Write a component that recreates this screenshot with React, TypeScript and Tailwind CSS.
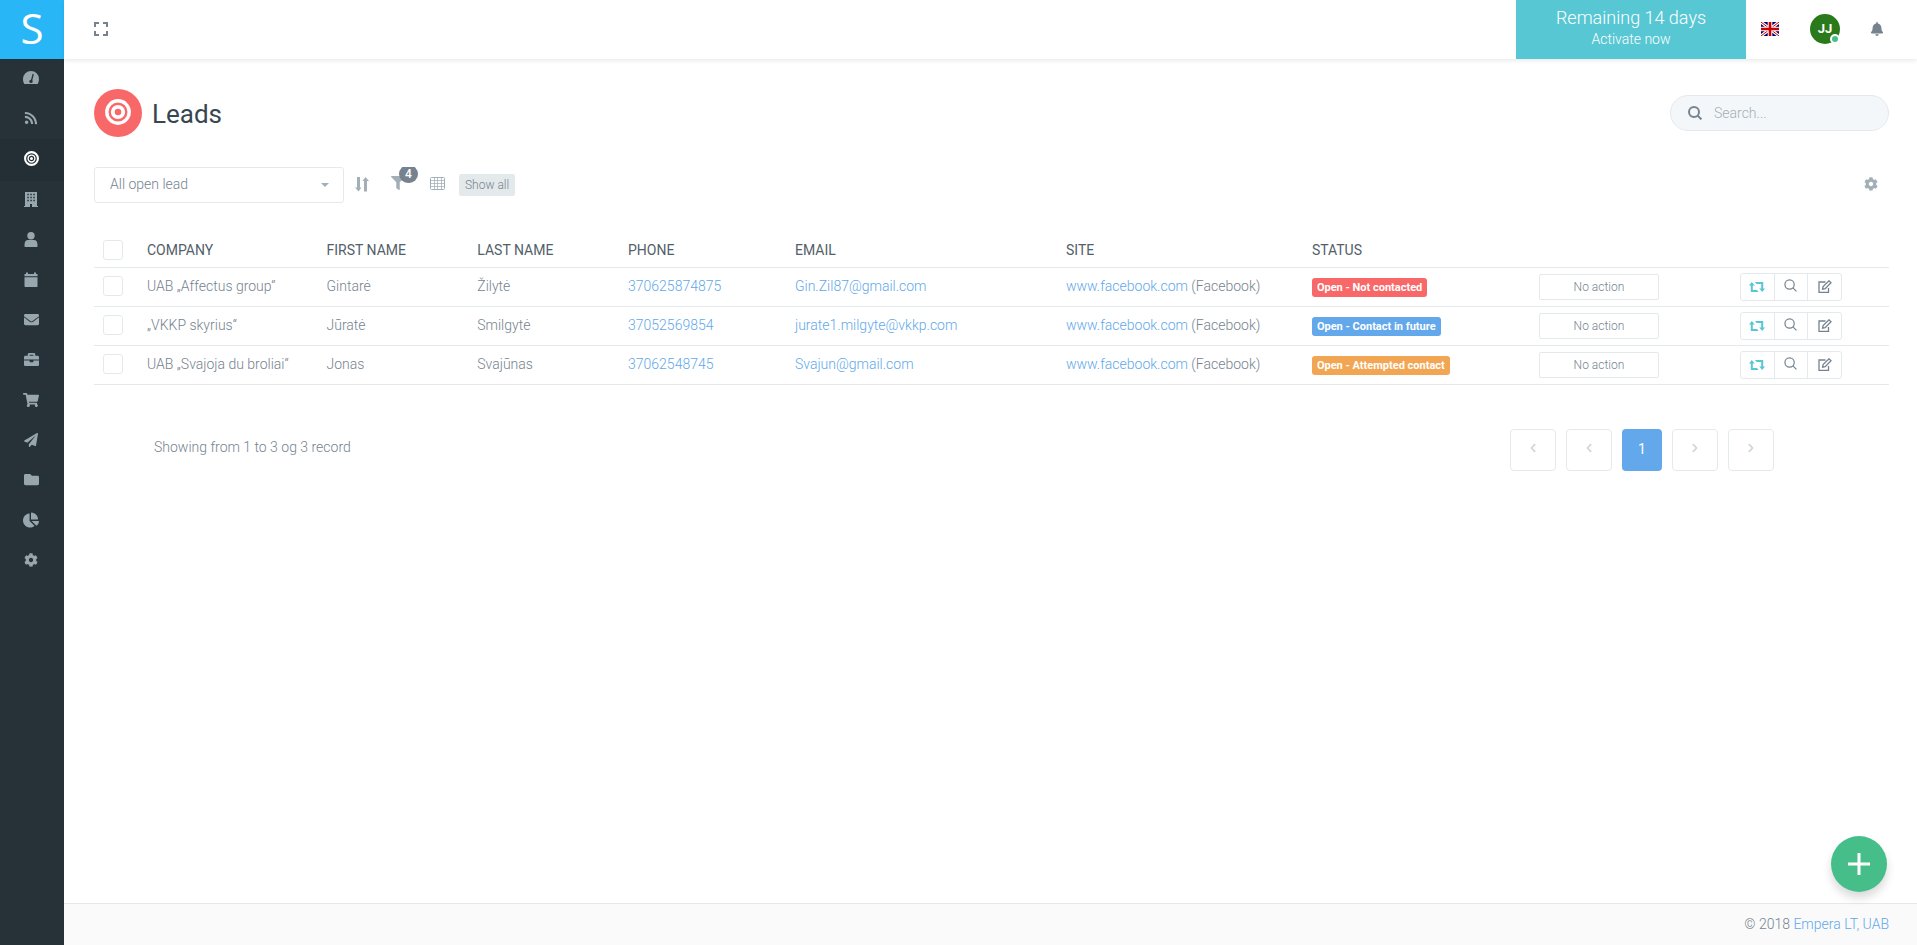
import type { ReactNode } from "react";
import {
  FaBell,
  FaBriefcase,
  FaChartPie,
  FaChevronLeft,
  FaChevronRight,
  FaCog,
  FaEnvelope,
  FaFilter,
  FaFolder,
  FaPaperPlane,
  FaRss,
  FaShoppingCart,
} from "react-icons/fa";

function TargetIcon({ size }: { size: number }) {
  return (
    <svg width={size} height={size} viewBox="0 0 28 28" fill="none" stroke="currentColor">
      <circle cx="14" cy="14" r="12" strokeWidth="4" />
      <circle cx="14" cy="14" r="6.4" strokeWidth="2.6" />
      <circle cx="14" cy="14" r="2.8" fill="currentColor" stroke="none" />
    </svg>
  );
}

function HeadingTargetIcon() {
  return (
    <svg width="26" height="26" viewBox="0 0 26 26" fill="none" stroke="currentColor">
      <circle cx="13" cy="13" r="11.2" strokeWidth="3.4" />
      <circle cx="13" cy="13" r="5.2" strokeWidth="3.8" />
    </svg>
  );
}

function GaugeIcon() {
  return (
    <svg width="16" height="13" viewBox="0 0 16 13">
      <path fill="currentColor" d="M8 0a8 8 0 0 1 8 8c0 1.8-.5 3.500-1.300 5H1.300A9 9 0 0 1 0 8a8 8 0 0 1 8-8Z" />
      <path d="M10.200 3 8.400 10" stroke="#263238" strokeWidth="1.3" />
      <circle cx="8" cy="10.400" r="1.7" fill="#263238" />
    </svg>
  );
}

function BuildingIcon() {
  return (
    <svg width="14" height="15" viewBox="0 0 14 15">
      <path fill="currentColor" d="M1 0h12v14h1v1H8v-3H6v3H0v-1h1Z" />
      <path stroke="#263238" strokeWidth="1.5" strokeDasharray="1.5 1.5" d="M3.300 2.500h8M3.300 5.500h8M3.300 8.500h8" />
    </svg>
  );
}

function UserIcon() {
  return (
    <svg width="14" height="15" viewBox="0 0 14 15" fill="currentColor">
      <circle cx="7" cy="3.700" r="3.700" />
      <path d="M4 8h6c2.200 0 3.500 1.800 3.500 5v1c0 .6-.4 1-1 1h-11c-.6 0-1-.4-1-1v-1c0-3.200 1.300-5 3.500-5Z" />
    </svg>
  );
}

function CalendarIcon() {
  return (
    <svg width="14" height="15" viewBox="0 0 14 15" fill="currentColor">
      <path d="M.5 2H2V.5h2V2h6V.5h2V2h1.500v2.200H.5Z" />
      <path d="M.5 5.200h13V14c0 .6-.4 1-1 1h-11c-.6 0-1-.4-1-1Z" />
    </svg>
  );
}

function ExpandIcon() {
  return (
    <svg width="14" height="14" viewBox="0 0 14 14" fill="none" stroke="currentColor" strokeWidth="2">
      <path d="M1 5V1h4M9 1h4v4M13 9v4H9M5 13H1V9" />
    </svg>
  );
}

function SearchIcon({ size, weight }: { size: number; weight: number }) {
  return (
    <svg width={size} height={size} viewBox="0 0 14 14" fill="none" stroke="currentColor" strokeWidth={weight}>
      <circle cx="6" cy="6" r="5" />
      <path d="m9.600 9.600 3.800 3.800" />
    </svg>
  );
}

function SortIcon() {
  return (
    <svg width="14" height="15" viewBox="0 0 14 15" fill="currentColor">
      <path d="M2 0h3v10.500h1.500L3.500 14.500 0 10.500h2ZM9 14.500h3V4h2L10.500 0 7.500 4H9Z" />
    </svg>
  );
}

function GridIcon() {
  return (
    <svg width="15" height="14" viewBox="0 0 15 14" fill="none" stroke="currentColor">
      <rect x=".5" y=".5" width="14" height="12" rx="1" />
      <path d="M.5 3.500h14M.5 6.500h14M.5 9.500h14M4.500 1v12M7.500 1v12M11.500 1v12" strokeOpacity=".75" />
    </svg>
  );
}

function ConvertIcon() {
  return (
    <svg width="16" height="10" viewBox="0 0 16 10" fill="currentColor">
      <path d="M2.800 0 5.800 3.500h-2V8H8l1.600 2H1.800V3.500H0ZM13.200 10l-3-3.500h2V2H7.600L6 0h8.200v6.500H16Z" />
    </svg>
  );
}

function EditIcon() {
  return (
    <svg width="14" height="13" viewBox="0 0 14 13" fill="none" stroke="currentColor" strokeWidth="1.300">
      <path d="M7.500 2H1v10.300h9.500V8" />
      <path d="m4.600 9.200.5-2.700L11 .8l2 2-5.800 5.900Z" />
    </svg>
  );
}

function FlagIcon() {
  return (
    <svg width="18" height="14" viewBox="0 0 18 14">
      <path fill="#00006b" d="M0 0h18v14H0z" />
      <path d="m0 0 18 14M18 0 0 14" stroke="#fff" strokeWidth="3" />
      <path d="m0 0 18 14M18 0 0 14" stroke="#cc0000" strokeWidth="1" />
      <path d="M9 0v14M0 7h18" stroke="#fff" strokeWidth="4.600" />
      <path d="M9 0v14M0 7h18" stroke="#cc0000" strokeWidth="2.600" />
    </svg>
  );
}

const menu: { label: string; icon: ReactNode; active?: boolean }[] = [
  { label: "Dashboard", icon: <GaugeIcon /> },
  { label: "Feed", icon: <FaRss size={14} /> },
  { label: "Leads", icon: <TargetIcon size={15} />, active: true },
  { label: "Companies", icon: <BuildingIcon /> },
  { label: "Contacts", icon: <UserIcon /> },
  { label: "Calendar", icon: <CalendarIcon /> },
  { label: "Mail", icon: <FaEnvelope size={15} /> },
  { label: "Deals", icon: <FaBriefcase size={15} /> },
  { label: "Orders", icon: <FaShoppingCart size={16} /> },
  { label: "Campaigns", icon: <FaPaperPlane size={14} /> },
  { label: "Files", icon: <FaFolder size={15} /> },
  { label: "Reports", icon: <FaChartPie size={16} /> },
  { label: "Settings", icon: <FaCog size={14} /> },
];

const leads = [
  { company: "UAB „Affectus group“", first: "Gintarė", last: "Žilytė", phone: "370625874875", email: "Gin.Zil87@gmail.com", status: "Open - Not contacted", color: "bg-[#f96868]" },
  { company: "„VKKP skyrius“", first: "Jūratė", last: "Smilgytė", phone: "37052569854", email: "jurate1.milgyte@vkkp.com", status: "Open - Contact in future", color: "bg-[#62a8ea]" },
  { company: "UAB „Svajoja du broliai“", first: "Jonas", last: "Svajūnas", phone: "37062548745", email: "Svajun@gmail.com", status: "Open - Attempted contact", color: "bg-[#f2a654]" },
];

function Checkbox({ label }: { label: string }) {
  return (
    <input
      type="checkbox"
      aria-label={label}
      className="ml-px block h-5 w-5 appearance-none rounded-[3px] border border-[#e4eaec] bg-white checked:bg-[#62a8ea]"
    />
  );
}

function Sidebar() {
  return (
    <aside className="w-16 shrink-0 bg-[#263238]">
      <a href="#" className="flex h-[59px] items-center justify-center bg-[#29b6f6] pb-1 font-['Open_Sans',sans-serif] text-[42px] leading-none font-normal text-white">
        S
      </a>
      <nav>
        {menu.map((item) => (
          <a
            key={item.label}
            href="#"
            aria-label={item.label}
            className={`flex items-center justify-center pr-[2px] pb-[3px] ${item.active ? "h-[42px] bg-[#242f35] text-white" : "h-10 text-[#98a6ad]"}`}
          >
            {item.icon}
          </a>
        ))}
      </nav>
    </aside>
  );
}

function Header() {
  return (
    <header className="flex h-[59px] items-center bg-white pl-[30px] text-[#76838f] shadow-[0_2px_4px_rgba(0,0,0,0.08)]">
      <button aria-label="Fullscreen" className="pb-px">
        <ExpandIcon />
      </button>
      <a href="#" className="ml-auto flex h-full w-[230px] flex-col items-center bg-[#57c7d4] pt-[5px] text-white">
        <span className="text-lg leading-[26px]">Remaining 14 days</span>
        <span className="text-sm leading-4">Activate now</span>
      </a>
      <button aria-label="Language" className="ml-[15px] pb-px">
        <FlagIcon />
      </button>
      <button className="relative mb-px ml-[31px] h-[30px] w-[30px] rounded-full bg-[#2a7a1b] text-[13px] font-bold text-white">
        JJ
        <span className="absolute right-0 bottom-0 h-[10px] w-[10px] rounded-full border-2 border-white bg-[#46be8a]" />
      </button>
      <button aria-label="Notifications" className="mr-[33px] ml-[30px] pb-[2px]">
        <FaBell size={14} />
      </button>
    </header>
  );
}

function Toolbar() {
  return (
    <div className="mt-[30px] flex h-9 items-center text-[#a3afb7]">
      <div className="relative h-full w-[250px]">
        <select aria-label="Lead filter" className="h-full w-full appearance-none rounded-[3px] border border-[#e4eaec] bg-white px-[15px] pb-[2px] text-sm text-[#76838f]">
          <option>All open lead</option>
        </select>
        <span className="pointer-events-none absolute top-4 right-[15px] border-x-4 border-t-4 border-x-transparent border-t-[#a3afb7]" />
      </div>
      <button aria-label="Sort" className="ml-[11px] pb-[2px]">
        <SortIcon />
      </button>
      <button aria-label="Filters" className="relative ml-[22px] flex h-9 w-7 items-center overflow-hidden pb-[4px]">
        <FaFilter size={14} />
        <span className="absolute top-[-2px] left-2 flex h-[18px] w-[19px] items-center justify-center rounded-full bg-[#76838f] text-xs font-medium text-white">
          4
        </span>
      </button>
      <button aria-label="Columns" className="ml-[11px] pb-[2px]">
        <GridIcon />
      </button>
      <button className="ml-[14px] h-[22px] rounded-[2px] bg-[#e4eaec] px-[6px] text-xs text-[#76838f]">Show all</button>
      <button aria-label="Table settings" className="mr-[11px] ml-auto pb-[2px]">
        <FaCog size={14} />
      </button>
    </div>
  );
}

function LeadsTable() {
  return (
    <table className="mt-[29px] w-full table-fixed text-left">
      <thead>
        <tr className="h-[35px] border-b border-[#e4eaec] text-[#526069] uppercase [&>th]:px-2 [&>th]:pt-[2px] [&>th]:font-normal">
          <th className="w-[45px]"><Checkbox label="Select all" /></th>
          <th className="w-[10%]">Company</th>
          <th className="w-[8.4%]">First name</th>
          <th className="w-[8.4%]">Last name</th>
          <th className="w-[9.3%]">Phone</th>
          <th className="w-[15.1%]">Email</th>
          <th className="w-[13.7%]">Site</th>
          <th className="w-[12.65%]">Status</th>
          <th className="w-[11.2%]" />
          <th />
        </tr>
      </thead>
      <tbody>
        {leads.map((lead) => (
          <tr key={lead.phone} className="h-[39px] border-b border-[#e4eaec] [&_a]:text-[#62a8ea] [&>td]:px-2">
            <td className="pb-[2px]"><Checkbox label={`Select ${lead.company}`} /></td>
            <td className="pb-[2px]">{lead.company}</td>
            <td className="pb-[2px]">{lead.first}</td>
            <td className="pb-[2px]">{lead.last}</td>
            <td className="pb-[2px]"><a href={`tel:${lead.phone}`}>{lead.phone}</a></td>
            <td className="pb-[2px]"><a href={`mailto:${lead.email}`}>{lead.email}</a></td>
            <td className="pb-[2px]"><a href="#">www.facebook.com</a> (Facebook)</td>
            <td>
              <span className={`mt-px block h-[19px] w-fit rounded-[3px] px-[5px] text-[11px] leading-[19px] font-bold whitespace-nowrap text-white ${lead.color}`}>
                {lead.status}
              </span>
            </td>
            <td>
              <button className="block h-[26px] w-[120px] rounded-[2px] border border-[#e4eaec] text-xs">No action</button>
            </td>
            <td>
              <div className="flex h-7 w-[102px] divide-x divide-[#e4eaec] rounded-[3px] border border-[#e4eaec] [&>button]:flex [&>button]:flex-1 [&>button]:items-center [&>button]:justify-center">
                <button aria-label="Convert" className="text-[#57c7d4]"><ConvertIcon /></button>
                <button aria-label="View" className="pb-[2px]"><SearchIcon size={13} weight={1.3} /></button>
                <button aria-label="Edit"><EditIcon /></button>
              </div>
            </td>
          </tr>
        ))}
      </tbody>
    </table>
  );
}

function Pagination() {
  const btn = "flex h-[42px] w-[46px] items-center justify-center rounded-[4px] border border-[#e4eaec] pb-[3px] text-[#ccd5db]";
  return (
    <div className="mt-11 flex items-start justify-between pr-[115px] pl-[60px]">
      <p className="pt-[7px]">Showing from 1 to 3 og 3 record</p>
      <div className="flex gap-[10px]">
        <button aria-label="First page" className={btn}><FaChevronLeft size={10} /></button>
        <button aria-label="Previous page" className={btn}><FaChevronLeft size={10} /></button>
        <button className="h-[42px] w-10 rounded-[4px] bg-[#62a8ea] pb-[2px] font-normal text-white">1</button>
        <button aria-label="Next page" className={btn}><FaChevronRight size={10} /></button>
        <button aria-label="Last page" className={btn}><FaChevronRight size={10} /></button>
      </div>
    </div>
  );
}

export default function App() {
  return (
    <div className="flex min-h-screen bg-white font-[Roboto,sans-serif] text-sm leading-[22px] font-light text-[#76838f]">
      <Sidebar />
      <div className="flex min-w-0 flex-1 flex-col">
        <Header />
        <main className="flex-1 px-7 pt-[30px] pl-[30px]">
          <div className="flex items-center">
            <span className="flex h-12 w-12 items-center justify-center rounded-full bg-[#f96868] pb-[2px] text-white">
              <HeadingTargetIcon />
            </span>
            <h1 className="ml-[10px] pt-[2px] text-[26px] font-normal text-[#37474f]">Leads</h1>
            <label className="ml-auto flex h-9 w-[219px] items-center rounded-full border border-[#e4eaec] bg-[#f3f7f9] pl-[17px]">
              <SearchIcon size={14} weight={2} />
              <input type="text" aria-label="Search" placeholder="Search..." className="ml-3 w-36 bg-transparent outline-none placeholder:text-[#a3afb7]" />
            </label>
          </div>
          <Toolbar />
          <LeadsTable />
          <Pagination />
        </main>
        <footer className="h-[42px] border-t border-[#e4eaec] bg-[#fafafa] pt-[9px] pr-7 text-right">
          © 2018 <a href="#" className="text-[#62a8ea]">Empera LT, UAB</a>
        </footer>
      </div>
      <button aria-label="Add lead" className="fixed right-[30px] bottom-[53px] flex h-14 w-14 items-center justify-center rounded-full bg-[#46be8a] text-white shadow-[0_6px_10px_rgba(0,0,0,0.15)]">
        <svg width="22" height="22" viewBox="0 0 22 22" stroke="currentColor" strokeWidth="3">
          <path d="M11 0v22M0 11h22" />
        </svg>
      </button>
    </div>
  );
}
